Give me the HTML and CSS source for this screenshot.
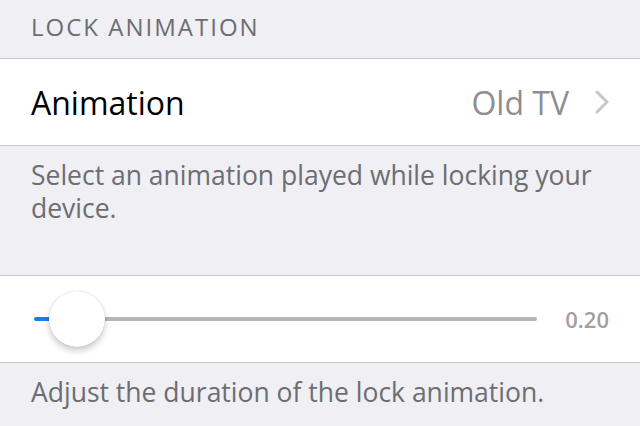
FILE: index.html
```html
<!DOCTYPE html>
<html lang="en">
<head>
  <meta charset="UTF-8" />
  <meta name="viewport" content="width=device-width, initial-scale=1.0" />
  <title>Lock Animation</title>
  <link rel="stylesheet" href="styles.css">
</head>
<body>
  <div class="settings">
    <div class="group-header">LOCK ANIMATION</div>

    <div class="cell">
      <span class="cell-label">Animation</span>
      <span class="cell-value">Old TV</span>
      <svg class="chevron" width="14" height="24" viewBox="0 0 14 24">
        <polyline points="2,2 12,12 2,22" fill="none" stroke="#c7c7cc" stroke-width="3" stroke-linecap="round" stroke-linejoin="round"/>
      </svg>
    </div>

    <div class="group-footer tall">Select an animation played while locking your device.</div>

    <div class="cell">
      <div class="slider">
        <div class="track-min"></div>
        <div class="thumb"></div>
        <div class="track-max"></div>
      </div>
      <span class="slider-value">0.20</span>
    </div>

    <div class="group-footer">Adjust the duration of the lock animation.</div>
  </div>
</body>
</html>
```

FILE: styles.css
```css
* {
  box-sizing: border-box;
}
body {
  margin: 0;
  background: #efeff4;
  font-family: "Open Sans", "Noto Sans", sans-serif;
  overflow: hidden;
}
.settings {
  width: 640px;
  display: flex;
  flex-direction: column;
}
.group-header {
  height: 58px;
  padding: 12px 0 0 31px;
  font-size: 24px;
  letter-spacing: 2px;
  color: #6d6d72;
  line-height: 30px;
}
.cell {
  height: 88px;
  background: #fff;
  border-top: 1px solid #c8c7cc;
  border-bottom: 1px solid #c8c7cc;
  display: flex;
  align-items: center;
  padding: 0 31px;
}
.cell-label {
  flex: 1;
  font-size: 32px;
  color: #000;
}
.cell-value {
  font-size: 32px;
  color: #8e8e93;
  margin-right: 26px;
}
.chevron {
  display: block;
}
.group-footer {
  padding: 13px 31px 0;
  font-size: 26.5px;
  line-height: 33px;
  color: #6d6d72;
}
.group-footer.tall {
  height: 129px;
}
.slider {
  flex: 1;
  display: flex;
  align-items: center;
  margin-left: 3px;
  margin-right: 28px;
}
.track-min {
  width: 18px;
  height: 4px;
  background: #1a7cf2;
  border-radius: 2px 0 0 2px;
}
.thumb {
  width: 56px;
  height: 56px;
  margin-left: -3px;
  border-radius: 50%;
  background: #fff;
  box-shadow: 0 0 1px rgba(0,0,0,0.25), 0 4px 6px rgba(0,0,0,0.2);
  flex-shrink: 0;
  position: relative;
  z-index: 1;
}
.track-max {
  flex: 1;
  height: 4px;
  margin-left: -1px;
  background: #b5b5b5;
  border-radius: 0 2px 2px 0;
}
.slider-value {
  font-size: 22px;
  font-weight: 600;
  color: #a0a0a4;
}
```
